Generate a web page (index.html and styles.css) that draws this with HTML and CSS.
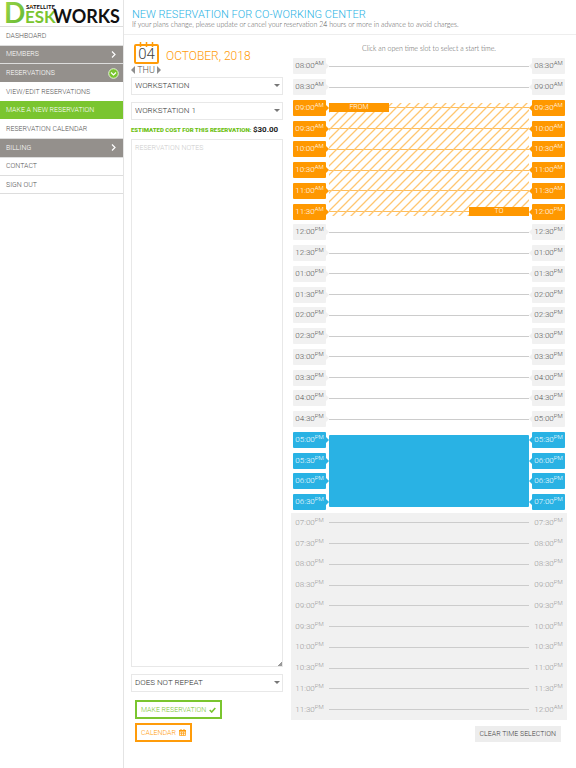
FILE: index.html
```html
<!DOCTYPE html>
<html lang="en">
<head>
<meta charset="utf-8">
<meta name="viewport" content="width=device-width, initial-scale=1">
<title>New Reservation</title>
<link rel="stylesheet" href="styles.css">
</head>
<body>
<div class="app">
  <aside class="sidebar">
    <a class="logo" href="#" aria-label="Satellite Deskworks">
      <svg width="123" height="26" viewBox="0 0 123 26">
        <defs><linearGradient id="leaf" x1="0" y1="0" x2="1" y2="1"><stop offset="0" stop-color="#a2d84a"/><stop offset="1" stop-color="#5cb531"/></linearGradient></defs>
        <text x="4" y="23" font-size="28" fill="url(#leaf)">D</text>
        <text x="25" y="23" font-size="17" fill="#7ac52f">ESK</text>
        <text x="53" y="23" font-size="18" fill="#111">WORKS</text>
        <text x="26" y="9" font-size="6" fill="#111">SATELLITE</text>
        <circle cx="31" cy="6" r="1" fill="#f7931e"/>
      </svg>
    </a>
    <nav class="nav">
      <a href="#">DASHBOARD</a>
      <a class="group" href="#">MEMBERS
        <svg class="chevron" width="9" height="9" viewBox="0 0 9 9"><path d="M3 1.500 6 4.500 3 7.500" fill="none" stroke="#fff" stroke-width="1.200"/></svg></a>
      <a class="group" href="#">RESERVATIONS
        <svg width="11" height="11" viewBox="0 0 11 11"><circle cx="5.500" cy="5.500" r="4.800" fill="#7ac52f" stroke="#e4f3d6"/><path d="M3 4.500 5.500 7 8 4.500" fill="none" stroke="#fff" stroke-width="1.200"/></svg></a>
      <a class="sub" href="#">VIEW/EDIT RESERVATIONS</a>
      <a class="current" href="#">MAKE A NEW RESERVATION</a>
      <a class="sub" href="#">RESERVATION CALENDAR</a>
      <a class="group" href="#">BILLING
        <svg class="chevron" width="9" height="9" viewBox="0 0 9 9"><path d="M3 1.500 6 4.500 3 7.500" fill="none" stroke="#fff" stroke-width="1.200"/></svg></a>
      <a href="#">CONTACT</a>
      <a href="#">SIGN OUT</a>
    </nav>
  </aside>
  <main class="main">
    <header class="header">
      <h1>NEW RESERVATION FOR CO-WORKING CENTER</h1>
      <p>If your plans change, please update or cancel your reservation 24 hours or more in advance to avoid charges.</p>
    </header>
    <div class="columns">
      <form class="booking">
        <div class="date">
          <div class="day">
            <div class="cal">
              <svg width="25" height="22" viewBox="0 0 25 22" aria-hidden="true"><rect x="1" y="3" width="23" height="18" rx="1" fill="none" stroke="#ff9c0a" stroke-width="2"/><path d="M6.500 0v5M12.500 0v5M18.500 0v5" stroke="#ff9c0a" stroke-width="1.500"/></svg>
              <span>04</span>
            </div>
            <div class="weekday">
              <button type="button" aria-label="Previous day"><svg width="4" height="8" viewBox="0 0 4 8"><path d="M4 0v8L0 4z" fill="#8f8f8f"/></svg></button>
              THU
              <button type="button" aria-label="Next day"><svg width="4" height="8" viewBox="0 0 4 8"><path d="M0 0v8l4-4z" fill="#8f8f8f"/></svg></button>
            </div>
          </div>
          <h2>OCTOBER, 2018</h2>
        </div>
        <div class="select"><select aria-label="Resource type"><option>WORKSTATION</option></select></div>
        <div class="select"><select aria-label="Resource"><option>WORKSTATION 1</option></select></div>
        <p class="cost">ESTIMATED COST FOR THIS RESERVATION: <b>$30.00</b></p>
        <textarea aria-label="Reservation notes" placeholder="RESERVATION NOTES"></textarea>
        <div class="select"><select aria-label="Repeat"><option>DOES NOT REPEAT</option></select></div>
        <div class="actions">
          <button class="make" type="button">MAKE RESERVATION <svg width="7" height="6" viewBox="0 0 7 6"><path d="M.7 3 2.700 5 6.300 1" fill="none" stroke="currentColor" stroke-width="1.600"/></svg></button>
          <button class="calendar" type="button">CALENDAR <svg width="7" height="7" viewBox="0 0 7 7"><path d="M.5 1.500h6v5h-6zM.5 3h6M.5 4.700h6M2.500 3v3.500M4.500 3v3.500" fill="none" stroke="currentColor" stroke-width=".7"/><path d="M0 1h7v1.500H0zM1.500 0h1v2h-1zM4.500 0h1v2h-1z" fill="currentColor"/></svg></button>
        </div>
      </form>
      <section class="times">
        <p class="hint">Click an open time slot to select a start time.</p>
        <div class="schedule">
          <div class="block two">
            <button class="slot"><span>08:00<sup>AM</sup></span><i></i><span>08:30<sup>AM</sup></span></button>
            <button class="slot"><span>08:30<sup>AM</sup></span><i></i><span>09:00<sup>AM</sup></span></button>
          </div>
          <div class="block six picked">
            <div class="range">
              <svg width="100%" height="100%" aria-hidden="true"><defs><pattern id="hatch" width="9" height="9" patternUnits="userSpaceOnUse"><path d="M-1 10 10-1M-1 1 1-1M8 10l2-2" stroke="#ffc670" stroke-width="1.300"/></pattern></defs><rect width="100%" height="100%" fill="url(#hatch)"/></svg>
              <span class="from">FROM</span><span class="to">TO</span>
            </div>
            <button class="slot"><span>09:00<sup>AM</sup></span><i></i><span>09:30<sup>AM</sup></span></button>
            <button class="slot"><span>09:30<sup>AM</sup></span><i></i><span>10:00<sup>AM</sup></span></button>
            <button class="slot"><span>10:00<sup>AM</sup></span><i></i><span>10:30<sup>AM</sup></span></button>
            <button class="slot"><span>10:30<sup>AM</sup></span><i></i><span>11:00<sup>AM</sup></span></button>
            <button class="slot"><span>11:00<sup>AM</sup></span><i></i><span>11:30<sup>AM</sup></span></button>
            <button class="slot"><span>11:30<sup>AM</sup></span><i></i><span>12:00<sup>PM</sup></span></button>
          </div>
          <div class="block ten">
            <button class="slot"><span>12:00<sup>PM</sup></span><i></i><span>12:30<sup>PM</sup></span></button>
            <button class="slot"><span>12:30<sup>PM</sup></span><i></i><span>01:00<sup>PM</sup></span></button>
            <button class="slot"><span>01:00<sup>PM</sup></span><i></i><span>01:30<sup>PM</sup></span></button>
            <button class="slot"><span>01:30<sup>PM</sup></span><i></i><span>02:00<sup>PM</sup></span></button>
            <button class="slot"><span>02:00<sup>PM</sup></span><i></i><span>02:30<sup>PM</sup></span></button>
            <button class="slot"><span>02:30<sup>PM</sup></span><i></i><span>03:00<sup>PM</sup></span></button>
            <button class="slot"><span>03:00<sup>PM</sup></span><i></i><span>03:30<sup>PM</sup></span></button>
            <button class="slot"><span>03:30<sup>PM</sup></span><i></i><span>04:00<sup>PM</sup></span></button>
            <button class="slot"><span>04:00<sup>PM</sup></span><i></i><span>04:30<sup>PM</sup></span></button>
            <button class="slot"><span>04:30<sup>PM</sup></span><i></i><span>05:00<sup>PM</sup></span></button>
          </div>
          <div class="block four booked">
            <button class="slot"><span>05:00<sup>PM</sup></span><i></i><span>05:30<sup>PM</sup></span></button>
            <button class="slot"><span>05:30<sup>PM</sup></span><i></i><span>06:00<sup>PM</sup></span></button>
            <button class="slot"><span>06:00<sup>PM</sup></span><i></i><span>06:30<sup>PM</sup></span></button>
            <button class="slot"><span>06:30<sup>PM</sup></span><i></i><span>07:00<sup>PM</sup></span></button>
            <div class="range"></div>
          </div>
          <div class="block ten closed">
            <button class="slot" disabled><span>07:00<sup>PM</sup></span><i></i><span>07:30<sup>PM</sup></span></button>
            <button class="slot" disabled><span>07:30<sup>PM</sup></span><i></i><span>08:00<sup>PM</sup></span></button>
            <button class="slot" disabled><span>08:00<sup>PM</sup></span><i></i><span>08:30<sup>PM</sup></span></button>
            <button class="slot" disabled><span>08:30<sup>PM</sup></span><i></i><span>09:00<sup>PM</sup></span></button>
            <button class="slot" disabled><span>09:00<sup>PM</sup></span><i></i><span>09:30<sup>PM</sup></span></button>
            <button class="slot" disabled><span>09:30<sup>PM</sup></span><i></i><span>10:00<sup>PM</sup></span></button>
            <button class="slot" disabled><span>10:00<sup>PM</sup></span><i></i><span>10:30<sup>PM</sup></span></button>
            <button class="slot" disabled><span>10:30<sup>PM</sup></span><i></i><span>11:00<sup>PM</sup></span></button>
            <button class="slot" disabled><span>11:00<sup>PM</sup></span><i></i><span>11:30<sup>PM</sup></span></button>
            <button class="slot" disabled><span>11:30<sup>PM</sup></span><i></i><span>12:00<sup>AM</sup></span></button>
          </div>
        </div>
        <button class="clear" type="button">CLEAR TIME SELECTION</button>
      </section>
    </div>
  </main>
</div>
</body>
</html>
```
FILE: styles.css
```css
* { box-sizing: border-box; }
body {
  margin: 0;
  background: #fff;
  color: #555;
  font: 300 7px/10px Roboto, "Liberation Sans", sans-serif;
}
h1, h2, p { margin: 0; font-weight: 300; }
button, select, textarea { font: inherit; color: inherit; }
button { padding: 0; border: 0; background: none; }
a { color: inherit; text-decoration: none; }
svg { display: block; }

.app {
  display: grid;
  grid-template-columns: 124px 1fr;
  min-height: 100vh;
}

.sidebar { border-right: 1px solid #e4e4e4; }
.logo { display: block; height: 26px; }
.logo svg { overflow: visible; }
.logo text { font-family: Lato, sans-serif; font-weight: 700; }
.nav {
  display: grid;
  grid-auto-rows: 1fr;
  height: 168px;
}
.nav a {
  display: flex;
  align-items: center;
  justify-content: space-between;
  padding: 0 4px 0 6px;
  border-top: 1px solid #ddd;
}
.nav a:last-child { border-bottom: 1px solid #ddd; }
.nav .group { background: #94908c; color: #fff; }
.nav .sub { border-color: #fff; }
.nav .current { background: #7ac52f; border-color: #7ac52f; color: #fff; }
.chevron { margin-right: 1px; }

.main { display: flex; flex-direction: column; }
.header {
  height: 35px;
  padding: 9px 8px 0;
  border-bottom: 1px solid #eee;
}
h1 { color: #29b2e4; font-size: 11px; line-height: 11px; }
.header p, .hint { line-height: 8px; }
.header p, .hint { font-family: Lato, sans-serif; }

.columns {
  display: grid;
  grid-template-columns: 152px 1fr;
  column-gap: 8px;
  padding: 7px 9px 0 7px;
}
.booking { display: flex; flex-direction: column; }
.date { display: flex; height: 35px; gap: 5px; }
.day { width: 30px; }
.cal { position: relative; width: 25px; margin-left: 3px; }
.cal span {
  position: absolute;
  inset: 4px 0 0;
  color: #444;
  font-size: 15px;
  line-height: 17px;
  text-align: center;
}
.weekday { display: flex; align-items: center; justify-content: space-between; margin-top: 1px; font-size: 9px; line-height: 10px; }
h2 { margin-top: 7px; color: #ff9c0a; font-size: 12px; line-height: 14px; }
.select { position: relative; }
.select + .select { margin-top: 7px; }
.select::after {
  content: "";
  position: absolute;
  top: 7px;
  right: 3px;
  border: 3px solid transparent;
  border-top-color: #777;
  pointer-events: none;
}
select, textarea {
  display: block;
  width: 100%;
  border: 1px solid #e8e8e8;
  border-radius: 0;
  background: #fff;
}
select { height: 18px; padding: 0 3px; appearance: none; color: #333; font-size: 8px; }
.cost { margin: 5px 0; color: #6cc010; font-size: 6px; line-height: 9px; font-weight: 900; white-space: nowrap; }
.cost b { color: #222; font-size: 8px; font-weight: 700; }
textarea { height: 528px; padding: 3px; margin-bottom: 7px; }
textarea::placeholder { color: #ccc; opacity: 1; }
textarea::-webkit-resizer { background: linear-gradient(135deg, transparent 85%, #999 85%); }

.times { display: flex; flex-direction: column; }
.hint { margin: 2px 0 4px; text-align: center; }
.schedule { flex: 1; display: flex; flex-direction: column; }
.block { position: relative; display: flex; flex-direction: column; }
.two { flex: 2 1 0; }
.four { flex: 4 1 0; }
.six { flex: 6 1 0; }
.ten { flex: 10 1 0; }
.slot {
  flex: 1 1 0;
  display: flex;
  align-items: center;
  gap: 3px;
  width: 100%;
  padding: 0 2px;
  --tag: #f1f1f1;
}
.slot span {
  position: relative;
  width: 33px;
  height: 16px;
  border-radius: 1px;
  background: var(--tag);
  font-size: 8px;
  line-height: 16px;
}
.slot span::after {
  content: "";
  position: absolute;
  top: 5px;
  left: 100%;
  border: 3px solid transparent;
  border-right-width: 0;
  border-left-color: var(--tag);
}
.slot span:last-child::after {
  right: 100%;
  left: auto;
  border-width: 3px 3px 3px 0;
  border-color: transparent var(--tag) transparent transparent;
}
.slot i { flex: 1; height: 1px; background: #ccc; }
sup { font-size: 6px; line-height: 0; vertical-align: 3px; }
.picked .slot { --tag: #ff9800; color: #fff; }
.picked .slot i { background: #ffbe5c; }
.booked .slot { --tag: #29b2e4; color: #fff; }
.closed { background: #f1f1f1; }
.closed .slot { color: #999; }
.range { position: absolute; inset: 5px 38px 6px; pointer-events: none; }
.booked .range { background: #29b2e4; border-radius: 1px; }
.from, .to {
  position: absolute;
  z-index: 1;
  width: 60px;
  background: #ff9800;
  color: #fff;
  line-height: 9px;
  text-align: center;
}
.from { top: 0; left: 0; }
.to { right: 0; bottom: 0; }

.actions { display: flex; flex-direction: column; align-items: flex-start; gap: 4px; margin: 8px 0 0 4px; }
.actions button {
  display: flex;
  align-items: center;
  gap: 3px;
  height: 19px;
  padding: 0 4px;
  border: 2px solid;
}
.actions .make { color: #7ac52f; }
.actions .calendar { color: #ff9c0a; }
.clear {
  align-self: flex-end;
  height: 16px;
  margin: 6px 6px 0 0;
  padding: 0 5px;
  background: #ededed;
  color: #444;
}
```
